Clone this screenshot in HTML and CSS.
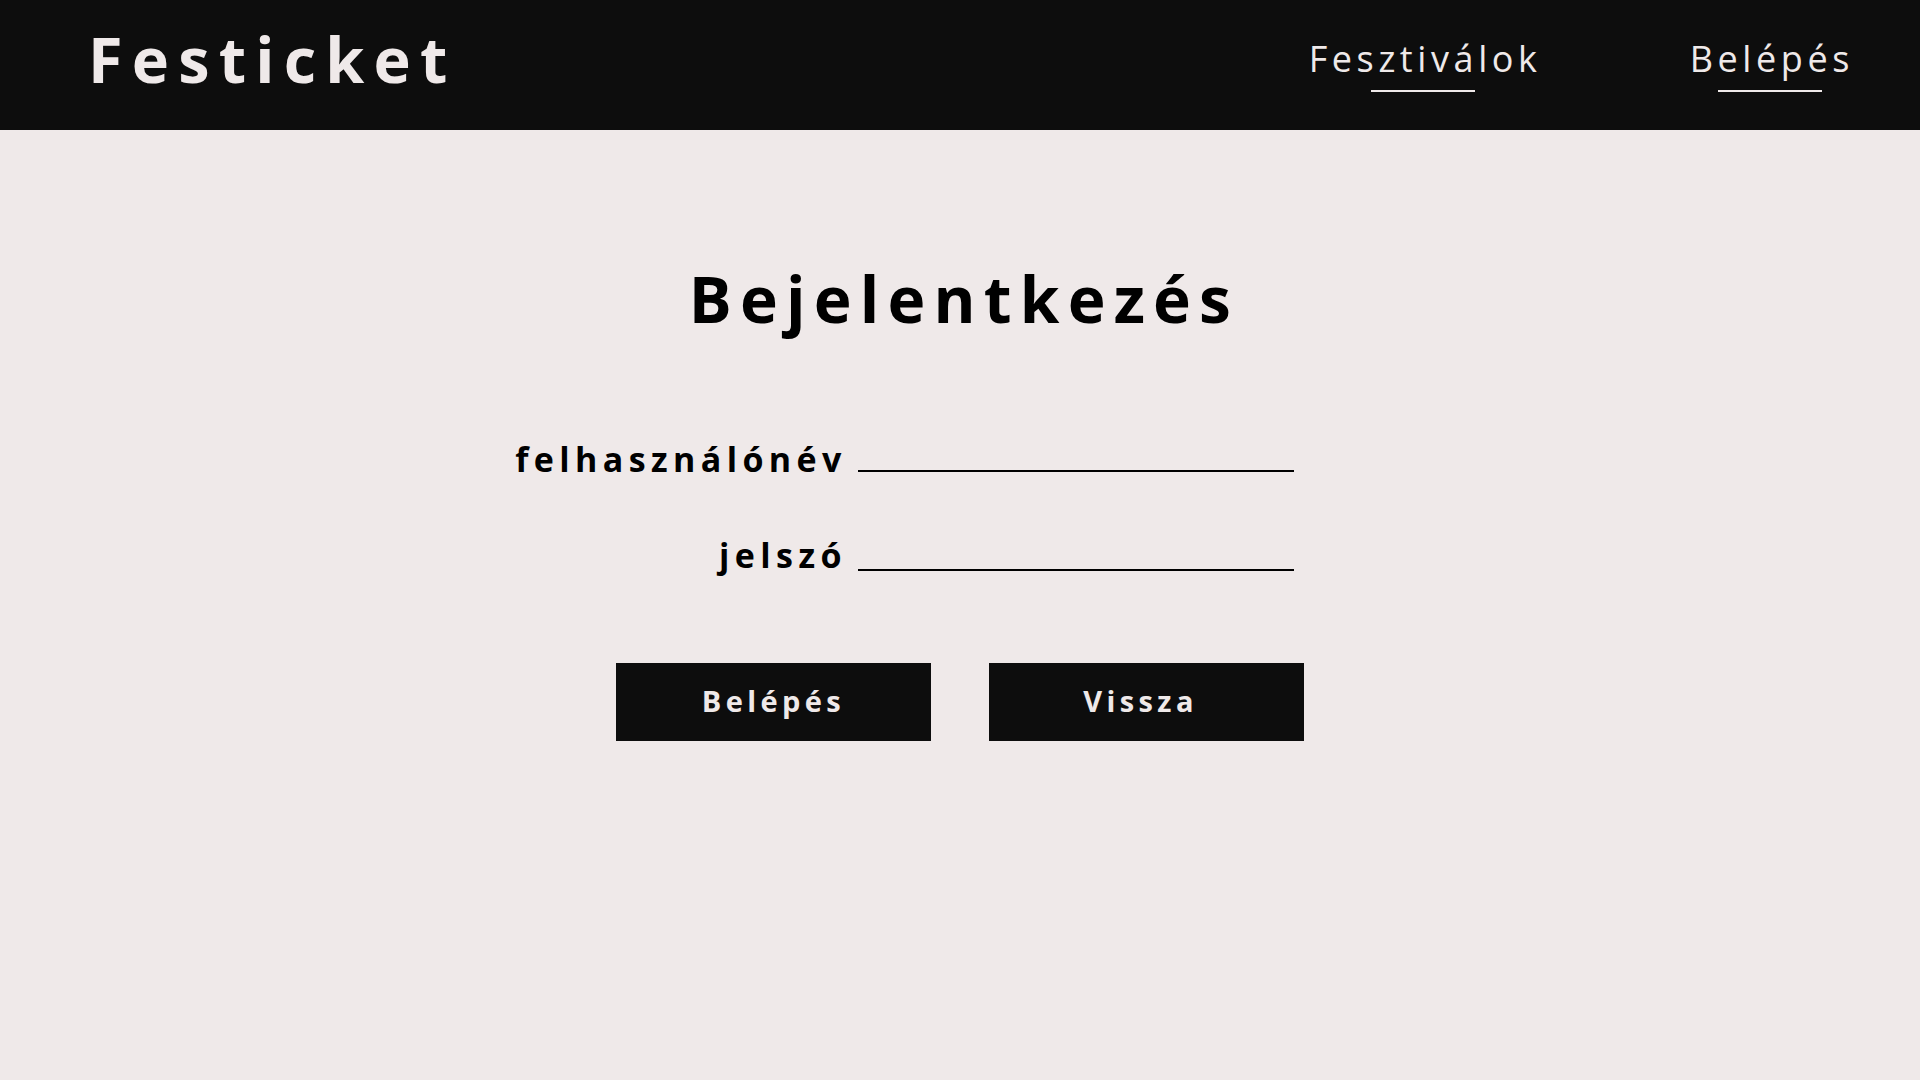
FILE: index.html
```html
<!DOCTYPE html>
<html lang="hu">
<head>
<meta charset="utf-8">
<title>Festicket – Bejelentkezés</title>
<link rel="stylesheet" href="styles.css">
</head>
<body>
<header class="topbar">
  <div class="logo">Festicket</div>
  <nav class="nav">
    <a class="nav-link" href="#">Fesztiválok</a>
    <a class="nav-link" href="#">Belépés</a>
  </nav>
</header>
<main class="main">
  <h1 class="title">Bejelentkezés</h1>
  <form class="login-form">
    <div class="fields">
      <label class="field-label" for="user">felhasználónév</label>
      <input class="field-input" id="user" type="text">
      <label class="field-label" for="pass">jelszó</label>
      <input class="field-input field-input-second" id="pass" type="password">
    </div>
    <div class="actions">
      <button class="btn" type="button">Belépés</button>
      <button class="btn btn-back" type="button">Vissza</button>
    </div>
  </form>
</main>
</body>
</html>
```
FILE: styles.css
```css
* { box-sizing: border-box; }

html, body {
  margin: 0;
  padding: 0;
}

body {
  background: #efe9e9;
  font-family: "Open Sans", "Noto Sans", sans-serif;
  color: #000;
  min-height: 1080px;
}

.topbar {
  height: 130px;
  background: #0d0d0d;
  display: flex;
  justify-content: space-between;
  align-items: flex-start;
  padding: 0 66px 0 88px;
}

.logo {
  font-size: 63px;
  line-height: 1;
  font-weight: 700;
  letter-spacing: 9.2px;
  color: #efe9e9;
  margin-top: 27px;
}

.nav {
  display: flex;
  gap: 148px;
  margin-top: 41px;
}

.nav-link {
  display: flex;
  flex-direction: column;
  align-items: center;
  font-size: 36px;
  line-height: 1;
  font-weight: 400;
  letter-spacing: 4.6px;
  color: #efe9e9;
  text-decoration: none;
}

.nav-link::after {
  content: "";
  display: block;
  width: 104px;
  height: 2px;
  background: #efe9e9;
  margin-top: 13px;
  margin-right: 4px;
}

.main {
  display: flex;
  flex-direction: column;
  align-items: center;
}

.title {
  margin: 137px 0 0;
  font-size: 64px;
  line-height: 1;
  font-weight: 700;
  letter-spacing: 8.2px;
  padding-left: 8px;
}

.login-form {
  width: 100%;
  display: flex;
  flex-direction: column;
  align-items: center;
}

.fields {
  margin-top: 111px;
  margin-right: 111px;
  display: grid;
  grid-template-columns: auto 436px;
  column-gap: 11px;
  row-gap: 62px;
  align-items: end;
}

.field-label {
  justify-self: end;
  font-size: 34px;
  line-height: 1;
  font-weight: 700;
  letter-spacing: 5.4px;
  white-space: nowrap;
}

.field-input {
  width: 436px;
  height: 30px;
  margin-bottom: 4px;
  border: 0;
  border-bottom: 2px solid #000;
  background: transparent;
  outline: none;
  font: inherit;
  font-size: 24px;
  padding: 0;
}

.field-input-second {
  margin-bottom: 1px;
}

.actions {
  margin-top: 91px;
  display: flex;
  gap: 58px;
}

.btn {
  width: 315px;
  height: 78px;
  padding: 0 0 2px;
  border: 0;
  border-radius: 0;
  background: #0d0d0d;
  color: #efe9e9;
  font-family: inherit;
  font-size: 29px;
  line-height: 76px;
  font-weight: 700;
  letter-spacing: 4.4px;
  cursor: pointer;
}

.btn-back {
  padding-right: 12px;
}
```
